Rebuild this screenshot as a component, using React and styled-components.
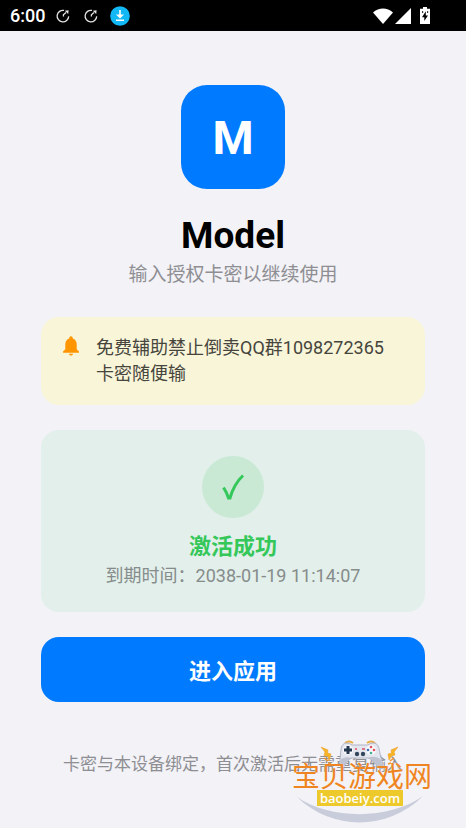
import React from "react"
import styled, { createGlobalStyle } from "styled-components"

const GlobalStyle = createGlobalStyle`
  body {
    margin: 0;
    background: #f2f2f7;
    font-family: Roboto, "Noto Sans CJK SC", sans-serif;
  }
`

const Page = styled.div`
  position: relative;
  min-height: 100vh;
  overflow: hidden;
`

const StatusBar = styled.header`
  display: flex;
  align-items: center;
  justify-content: space-between;
  height: 31px;
  padding: 0 36px 0 10px;
  box-sizing: border-box;
  background: #000000;
  color: #ffffff;
`

const StatusGroup = styled.div`
  display: flex;
  align-items: center;
  gap: ${({ $gap }) => $gap}px;
`

const Clock = styled.time`
  font-size: 18px;
  font-weight: 500;
  line-height: 20px;
`

const Main = styled.main`
  display: flex;
  flex-direction: column;
  align-items: center;
  padding: 54px 41px 52px;
`

const Logo = styled.div`
  display: flex;
  align-items: center;
  justify-content: center;
  width: 104px;
  height: 104px;
  border-radius: 26px;
  background: #007aff;
  color: #ffffff;
  font-size: 47px;
  font-weight: 700;
`

const Title = styled.h1`
  margin: 26px 0 0;
  font-size: 37px;
  font-weight: 700;
  line-height: 42px;
  color: #000000;
`

const Subtitle = styled.p`
  margin: 4px 0 0;
  font-size: 19px;
  line-height: 28px;
  color: #8e8e93;
`

const Notice = styled.section`
  display: flex;
  align-items: flex-start;
  gap: 14px;
  width: 100%;
  margin-top: 28px;
  padding: 18px 20px;
  box-sizing: border-box;
  border-radius: 18px;
  background: #f9f5d9;
`

const NoticeText = styled.p`
  margin: 0;
  font-size: 18px;
  line-height: 26px;
  color: #46453d;
`

const Result = styled.section`
  display: flex;
  flex-direction: column;
  align-items: center;
  width: 100%;
  margin-top: 25px;
  padding: 26px 20px 23px;
  box-sizing: border-box;
  border-radius: 18px;
  background: #e2efea;
`

const ResultBadge = styled.div`
  display: flex;
  align-items: center;
  justify-content: center;
  width: 62px;
  height: 62px;
  border-radius: 50%;
  background: #c9e9d5;
`

const ResultTitle = styled.h2`
  margin: 13px 0 0;
  font-size: 22px;
  font-weight: 700;
  line-height: 32px;
  color: #34c759;
`

const ResultTime = styled.p`
  margin: 0;
  font-size: 18px;
  line-height: 26px;
  color: #868c8b;
`

const EnterButton = styled.button`
  width: 100%;
  height: 65px;
  margin-top: 25px;
  padding: 0 20px 2px;
  border: none;
  border-radius: 18px;
  background: #007aff;
  color: #ffffff;
  font-family: inherit;
  font-size: 22px;
  font-weight: 700;
  cursor: pointer;
`

const Footnote = styled.p`
  margin: 50px 0 0;
  font-size: 17px;
  line-height: 24px;
  color: #8e8e93;
  white-space: nowrap;
`

const BellIcon = styled.svg`
  flex: none;
  margin-left: -1px;
`

/* site mark laid over the bottom right corner */
const Watermark = styled.div`
  position: absolute;
  right: 34px;
  bottom: 3px;
  display: flex;
  flex-direction: column;
  align-items: center;
  width: 140px;
  height: 86px;
`

const WatermarkArt = styled.svg`
  position: absolute;
  left: 0;
  top: 0;
`

const WatermarkName = styled.div`
  position: relative;
  margin-top: 26px;
  font-size: 28px;
  line-height: 25px;
  color: #ee8522;
  white-space: nowrap;
  text-shadow: 0 0 1px #ffffff;
`

const WatermarkSite = styled.div`
  position: relative;
  width: 86px;
  margin-right: 4px;
  background: #edc92c;
  color: #ffffff;
  font-family: "Open Sans", sans-serif;
  font-size: 13px;
  font-weight: 600;
  line-height: 16px;
  text-align: center;
`

const SyncIcon = () => (
  <svg width="14" height="16" viewBox="0 0 14 16" fill="none" aria-hidden="true">
    <path
      d="M8 2.4A5.8 5.8 0 1 0 12.7 8.4"
      stroke="#e4e4e4"
      strokeWidth="1.3"
    />
    <path d="M7.4 8.6V6.8L10 4.6" stroke="#e4e4e4" strokeWidth="1.3" />
    <path d="M8.8 2.8L12.6 2.2L12.2 6Z" fill="#e4e4e4" />
  </svg>
)

const DownloadIcon = () => (
  <svg width="20" height="20" viewBox="0 0 20 20" fill="none" aria-hidden="true">
    <circle cx="10" cy="10" r="9.8" fill="#12b7f5" />
    <path d="M10 4v6M6 14.2h8" stroke="#ffffff" strokeWidth="1.6" />
    <path d="M6 8.5h8l-4 4Z" fill="#ffffff" />
  </svg>
)

const WifiIcon = () => (
  <svg width="20" height="16" viewBox="0 0 20 16" aria-hidden="true">
    <path d="M0 4.6C5.8-.9 14.2-.9 20 4.6L10 16Z" fill="#ffffff" />
  </svg>
)

const SignalIcon = () => (
  <svg width="16" height="16" viewBox="0 0 16 16" aria-hidden="true">
    <path d="M16 0v16H0Z" fill="#ffffff" />
  </svg>
)

const BatteryIcon = () => (
  <svg width="10" height="17" viewBox="0 0 10 17" aria-hidden="true">
    <path d="M3 0h4v1.7h3V17H0V1.7h3Z" fill="#ffffff" />
    <path d="M5.8 4.3L2 10.2h2.3V14L8 8.6H5.8Z" fill="#000000" />
    <path d="M2 4.2h1.2v1.6H2ZM7 4.2h1.2v1.6H7Z" fill="#000000" />
  </svg>
)

const WatermarkPicture = () => (
  <WatermarkArt
    width="140"
    height="86"
    viewBox="0 0 140 86"
    fill="none"
    aria-hidden="true"
  >
    <path d="M5 58C40 92 96 92 131 57C98 81 38 81 5 58Z" fill="#c9ccda" />
    <path
      d="M29 8L36 11L35.5 14L39 15L37 22L36 17.5L32 16.5L33 13Z"
      fill="#f7b522"
      stroke="#f0a030"
      strokeWidth="0.6"
    />
    <path
      d="M106 8L99 11L99.500 14L96 15L97 21L99.500 17L103 16L102 13Z"
      fill="#f7b522"
      stroke="#f0a030"
      strokeWidth="0.6"
    />
    <path
      d="M32 19l4 3M36 24l3 1M102 19l-4 3M99 24l-3 1"
      stroke="#f0922a"
      strokeWidth="1.5"
    />
    <path d="M53 4q4-3 8 0M75 4q4-3 8 0" stroke="#e9ad43" strokeWidth="2" />
    <path
      d="M54 4C49 5 49 10 48.5 16Q47 28 49.5 28C54 28 55 20 60 19H76C82 20 83 28 89 28Q92 28 88 15C87 8 86 4 81 4Q78 4 76 6H60Q58 4 54 4Z"
      fill="#e4e6ef"
      stroke="#b0b4c4"
      strokeWidth="1"
    />
    <path
      d="M49 20Q47 28 49.500 28C54 28 55 20 60 19Q54 17 49 20ZM76 19C82 20 83 28 89 28Q91 28 88.500 20Q82 16 76 19Z"
      fill="#bfc2d0"
    />
    <circle cx="56" cy="11" r="5" fill="#f8f8fc" />
    <circle cx="79" cy="11" r="5" fill="#f8f8fc" />
    <path d="M56 7v8M52 11h8" stroke="#24384f" strokeWidth="3" />
    <circle cx="79" cy="8" r="1.3" fill="#df5361" />
    <circle cx="82" cy="11" r="1.3" fill="#df5361" />
    <circle cx="79" cy="14" r="1.3" fill="#42ae95" />
    <circle cx="76" cy="11" r="1.3" fill="#416fb0" />
    <circle cx="65" cy="15" r="2.2" fill="#34465b" />
    <circle cx="71" cy="15" r="2.2" fill="#34465b" />
    <path d="M63 10h2M70 10h3" stroke="#dc4e5f" strokeWidth="1.4" />
  </WatermarkArt>
)

export default function App() {
  return (
    <>
      <GlobalStyle />
      <Page>
        <StatusBar>
          <StatusGroup $gap={14}>
            <StatusGroup $gap={11}>
              <Clock>6:00</Clock>
              <SyncIcon />
            </StatusGroup>
            <StatusGroup $gap={12}>
              <SyncIcon />
              <DownloadIcon />
            </StatusGroup>
          </StatusGroup>
          <StatusGroup $gap={9}>
            <StatusGroup $gap={2}>
              <WifiIcon />
              <SignalIcon />
            </StatusGroup>
            <BatteryIcon />
          </StatusGroup>
        </StatusBar>
        <Main>
          <Logo>M</Logo>
          <Title>Model</Title>
          <Subtitle>输入授权卡密以继续使用</Subtitle>
          <Notice>
            <BellIcon width="22" height="24" viewBox="0 0 22 24" aria-hidden="true">
              <path
                d="M11 1.2C12 1.2 12.7 2 12.7 3V3.6C15.3 4.4 16.7 6.7 16.7 9.4V14.2L19 16.6V17.7H3V16.6L5.3 14.2V9.4C5.3 6.7 6.7 4.4 9.3 3.6V3C9.3 2 10 1.2 11 1.2ZM9 18.7H13C13 19.8 12.1 20.6 11 20.6S9 19.8 9 18.7Z"
                fill="#ff9500"
              />
            </BellIcon>
            <NoticeText>
              免费辅助禁止倒卖QQ群1098272365
              <br />
              卡密随便输
            </NoticeText>
          </Notice>
          <Result>
            <ResultBadge>
              <svg width="24" height="30" viewBox="0 0 24 30" fill="none" aria-hidden="true">
                <path
                  d="M2.5 15.5Q5.5 20 7.5 26H9Q13 12 22 3.5"
                  stroke="#34c759"
                  strokeWidth="3"
                />
              </svg>
            </ResultBadge>
            <ResultTitle>激活成功</ResultTitle>
            <ResultTime>到期时间：2038-01-19 11:14:07</ResultTime>
          </Result>
          <EnterButton type="button">进入应用</EnterButton>
          <Footnote>卡密与本设备绑定，首次激活后无需重复输入</Footnote>
        </Main>
        <Watermark>
          <WatermarkPicture />
          <WatermarkName>宝贝游戏网</WatermarkName>
          <WatermarkSite>baobeiy.com</WatermarkSite>
        </Watermark>
      </Page>
    </>
  )
}
